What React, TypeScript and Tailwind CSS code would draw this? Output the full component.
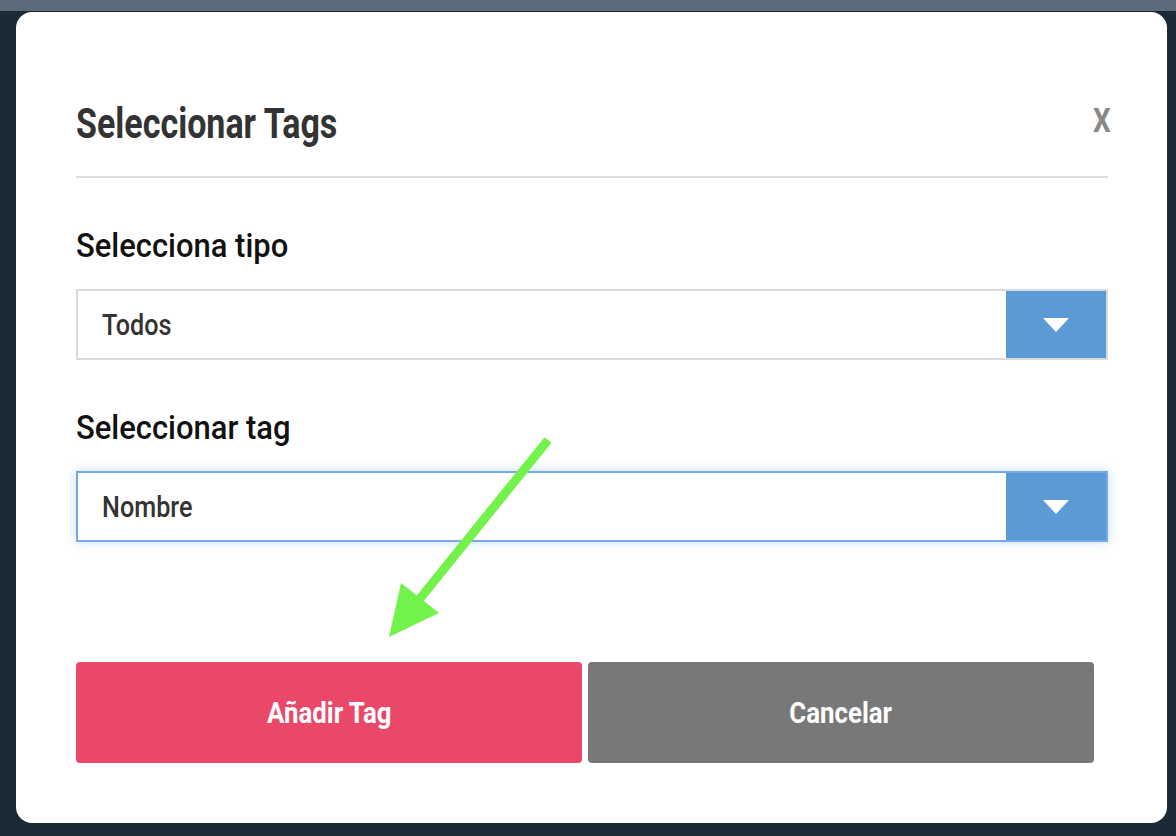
import React from "react";

function Caret() {
  return (
    <svg width="26" height="14" viewBox="0 0 26 14" className="block">
      <polygon points="0,0 26,0 13,14" fill="#ffffff" />
    </svg>
  );
}

function Select({ value, focused }: { value: string; focused?: boolean }) {
  return (
    <div
      className={
        focused
          ? "flex h-[71px] w-full border-2 border-[#76a9e8] bg-white shadow-[0_0_10px_rgba(82,148,220,0.35)]"
          : "flex h-[71px] w-full border-2 border-[#dadada] bg-white"
      }
    >
      <div className="flex flex-1 items-center pl-[24px]">
        <span className="inline-block origin-left scale-x-[0.84] text-[30px] font-medium leading-none text-[#333333]">
          {value}
        </span>
      </div>
      <div className="flex w-[100px] items-center justify-center bg-[#5b9bd5]">
        <Caret />
      </div>
    </div>
  );
}

export default function App() {
  return (
    <div className="relative h-[836px] w-[1176px] overflow-hidden bg-[#1b2a36] font-['Roboto',sans-serif]">
      <div className="h-[11px] w-full bg-[#5b6b7a]" />
      <div className="pl-[16px] pt-px">
        <div className="flex h-[811px] w-[1151px] flex-col rounded-[16px] bg-white pb-[60px] pl-[60px] pr-[59px] pt-[91px]">
          <div className="flex h-[42px] items-start justify-between">
            <span className="inline-block origin-left scale-x-[0.81] text-[42px] font-bold leading-none text-[#333333]">
              Seleccionar Tags
            </span>
            <span className="mr-[-3px] inline-block origin-right scale-x-[0.82] text-[34px] font-bold leading-none text-[#888888]">
              X
            </span>
          </div>
          <div className="mt-[31px] h-[2px] w-full bg-[#dcdcdc]" />

          <div className="mt-[50px] flex">
            <span className="inline-block origin-left scale-x-[0.91] text-[34px] font-medium leading-none text-[#111111]">
              Selecciona tipo
            </span>
          </div>
          <div className="mt-[27px] flex">
            <Select value="Todos" />
          </div>

          <div className="mt-[50px] flex">
            <span className="inline-block origin-left scale-x-[0.91] text-[34px] font-medium leading-none text-[#111111]">
              Seleccionar tag
            </span>
          </div>
          <div className="mt-[27px] flex">
            <Select value="Nombre" focused />
          </div>

          <div className="mt-[120px] flex gap-[6px]">
            <button className="flex h-[101px] w-[506px] items-center justify-center rounded-[4px] bg-[#ea4869]">
              <span className="inline-block scale-x-[0.86] text-[30px] font-bold leading-none text-white">
                Añadir Tag
              </span>
            </button>
            <button className="flex h-[101px] w-[506px] items-center justify-center rounded-[4px] bg-[#787878]">
              <span className="inline-block scale-x-[0.86] text-[30px] font-bold leading-none text-white">
                Cancelar
              </span>
            </button>
          </div>
        </div>
      </div>

      <svg
        className="pointer-events-none absolute left-0 top-0"
        width="1176"
        height="836"
        viewBox="0 0 1176 836"
      >
        <line x1="548" y1="440" x2="418" y2="601" stroke="#74f24c" strokeWidth="9" />
        <polygon points="401,583 439,613 389,637" fill="#74f24c" />
      </svg>
    </div>
  );
}
